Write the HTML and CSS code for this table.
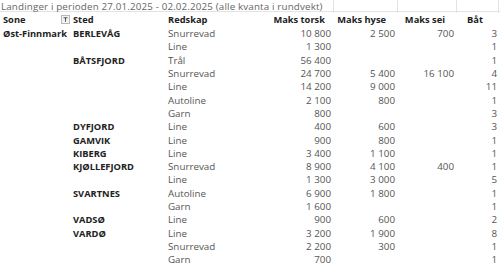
FILE: index.html
```html
<!DOCTYPE html>
<html lang="no">
<head>
<meta charset="utf-8">
<title>Landinger</title>
<link rel="stylesheet" href="styles.css">
</head>
<body>
<div class="sheet">
  <div class="row title-row">
    <div class="cell title">Landinger i perioden 27.01.2025 - 02.02.2025 (alle kvanta i rundvekt)</div>
    <div class="cell grid c5"></div>
    <div class="cell grid c6"></div>
    <div class="cell grid c7"></div>
  </div>
  <div class="row head">
    <div class="cell c1 hsone"><span>Sone</span><span class="filter"><svg width="9" height="9" viewBox="0 0 9 9"><rect x="0.5" y="0.5" width="8" height="8" fill="#f2f2f2" stroke="#b8b8b8"/><path d="M2.5 2.8h4M4.5 2.8v4" stroke="#555" stroke-width="1"/></svg></span></div>
    <div class="cell c2">Sted</div>
    <div class="cell c3">Redskap</div>
    <div class="cell c4 num">Maks torsk</div>
    <div class="cell c5 num">Maks hyse</div>
    <div class="cell c6 num">Maks sei</div>
    <div class="cell c7 num">Båt</div>
  </div>
  <div class="row"><div class="cell c1 sone">Øst-Finnmark</div><div class="cell c2 sted">BERLEVÅG</div><div class="cell c3">Snurrevad</div><div class="cell c4 num">10 800</div><div class="cell c5 num">2 500</div><div class="cell c6 num">700</div><div class="cell c7 num">3</div></div>
  <div class="row"><div class="cell c1"></div><div class="cell c2 sted"></div><div class="cell c3">Line</div><div class="cell c4 num">1 300</div><div class="cell c5 num"></div><div class="cell c6 num"></div><div class="cell c7 num">1</div></div>
  <div class="row"><div class="cell c1"></div><div class="cell c2 sted">BÅTSFJORD</div><div class="cell c3">Trål</div><div class="cell c4 num">56 400</div><div class="cell c5 num"></div><div class="cell c6 num"></div><div class="cell c7 num">1</div></div>
  <div class="row"><div class="cell c1"></div><div class="cell c2 sted"></div><div class="cell c3">Snurrevad</div><div class="cell c4 num">24 700</div><div class="cell c5 num">5 400</div><div class="cell c6 num">16 100</div><div class="cell c7 num">4</div></div>
  <div class="row"><div class="cell c1"></div><div class="cell c2 sted"></div><div class="cell c3">Line</div><div class="cell c4 num">14 200</div><div class="cell c5 num">9 000</div><div class="cell c6 num"></div><div class="cell c7 num">11</div></div>
  <div class="row"><div class="cell c1"></div><div class="cell c2 sted"></div><div class="cell c3">Autoline</div><div class="cell c4 num">2 100</div><div class="cell c5 num">800</div><div class="cell c6 num"></div><div class="cell c7 num">1</div></div>
  <div class="row"><div class="cell c1"></div><div class="cell c2 sted"></div><div class="cell c3">Garn</div><div class="cell c4 num">800</div><div class="cell c5 num"></div><div class="cell c6 num"></div><div class="cell c7 num">3</div></div>
  <div class="row"><div class="cell c1"></div><div class="cell c2 sted">DYFJORD</div><div class="cell c3">Line</div><div class="cell c4 num">400</div><div class="cell c5 num">600</div><div class="cell c6 num"></div><div class="cell c7 num">3</div></div>
  <div class="row"><div class="cell c1"></div><div class="cell c2 sted">GAMVIK</div><div class="cell c3">Line</div><div class="cell c4 num">900</div><div class="cell c5 num">800</div><div class="cell c6 num"></div><div class="cell c7 num">1</div></div>
  <div class="row"><div class="cell c1"></div><div class="cell c2 sted">KIBERG</div><div class="cell c3">Line</div><div class="cell c4 num">3 400</div><div class="cell c5 num">1 100</div><div class="cell c6 num"></div><div class="cell c7 num">1</div></div>
  <div class="row"><div class="cell c1"></div><div class="cell c2 sted">KJØLLEFJORD</div><div class="cell c3">Snurrevad</div><div class="cell c4 num">8 900</div><div class="cell c5 num">4 100</div><div class="cell c6 num">400</div><div class="cell c7 num">1</div></div>
  <div class="row"><div class="cell c1"></div><div class="cell c2 sted"></div><div class="cell c3">Line</div><div class="cell c4 num">1 300</div><div class="cell c5 num">3 000</div><div class="cell c6 num"></div><div class="cell c7 num">5</div></div>
  <div class="row"><div class="cell c1"></div><div class="cell c2 sted">SVARTNES</div><div class="cell c3">Autoline</div><div class="cell c4 num">6 900</div><div class="cell c5 num">1 800</div><div class="cell c6 num"></div><div class="cell c7 num">1</div></div>
  <div class="row"><div class="cell c1"></div><div class="cell c2 sted"></div><div class="cell c3">Garn</div><div class="cell c4 num">1 600</div><div class="cell c5 num"></div><div class="cell c6 num"></div><div class="cell c7 num">1</div></div>
  <div class="row"><div class="cell c1"></div><div class="cell c2 sted">VADSØ</div><div class="cell c3">Line</div><div class="cell c4 num">900</div><div class="cell c5 num">600</div><div class="cell c6 num"></div><div class="cell c7 num">2</div></div>
  <div class="row"><div class="cell c1"></div><div class="cell c2 sted">VARDØ</div><div class="cell c3">Line</div><div class="cell c4 num">3 200</div><div class="cell c5 num">1 900</div><div class="cell c6 num"></div><div class="cell c7 num">8</div></div>
  <div class="row"><div class="cell c1"></div><div class="cell c2 sted"></div><div class="cell c3">Snurrevad</div><div class="cell c4 num">2 200</div><div class="cell c5 num">300</div><div class="cell c6 num"></div><div class="cell c7 num">1</div></div>
  <div class="row last"><div class="cell c1"></div><div class="cell c2 sted"></div><div class="cell c3">Garn</div><div class="cell c4 num">700</div><div class="cell c5 num"></div><div class="cell c6 num"></div><div class="cell c7 num">1</div></div>
  <div class="scrollbar"><div class="thumb"></div></div>
</div>
</body>
</html>
```
FILE: styles.css
```css
html, body {
  margin: 0;
  padding: 0;
  background: #ffffff;
}
.sheet {
  width: 500px;
  height: 267px;
  overflow: hidden;
  font-family: "Open Sans", "DejaVu Sans", sans-serif;
  font-size: 9.8px;
  color: #555555;
}
.row {
  display: grid;
  grid-template-columns: 72px 94px 96px 71px 64px 59px 43px;
  height: 13.3px;
  align-items: center;
}
.cell {
  white-space: nowrap;
  height: 100%;
  display: flex;
  align-items: center;
  min-width: 0;
}
.num {
  justify-content: flex-end;
  padding-right: 2px;
}
.title-row {
  height: 11px;
  border-bottom: 1px solid #e3e3e3;
}
.title {
  grid-column: 1 / 5;
  color: #666666;
  padding-left: 1px;
  letter-spacing: 0.15px;
  overflow: visible;
}
.grid {
  border-left: 1px solid #e3e3e3;
}
.grid.c7 {
  border-right: 1px solid #e3e3e3;
}
.head {
  height: 15px;
  color: #222222;
  font-weight: 700;
  font-size: 9.3px;
}
.head .c4 {
  padding-right: 8px;
}
.head .c5 {
  padding-right: 11px;
}
.head .c6 {
  padding-right: 11px;
}
.head .c7 {
  padding-right: 16px;
}
.hsone {
  padding-left: 3px;
  justify-content: space-between;
  padding-right: 2px;
}
.filter {
  display: flex;
}
.c2 {
  padding-left: 1px;
}
.c3 {
  padding-left: 2px;
}
.sone {
  padding-left: 3px;
  color: #222222;
  font-weight: 700;
  font-size: 9.3px;
}
.sted {
  color: #222222;
  font-weight: 700;
  font-size: 9.3px;
}
.scrollbar {
  height: 1px;
  margin-top: 4px;
  background: #e6e6e6;
}
.thumb {
  width: 72px;
  height: 1px;
  background: #c8c8c8;
}
```
